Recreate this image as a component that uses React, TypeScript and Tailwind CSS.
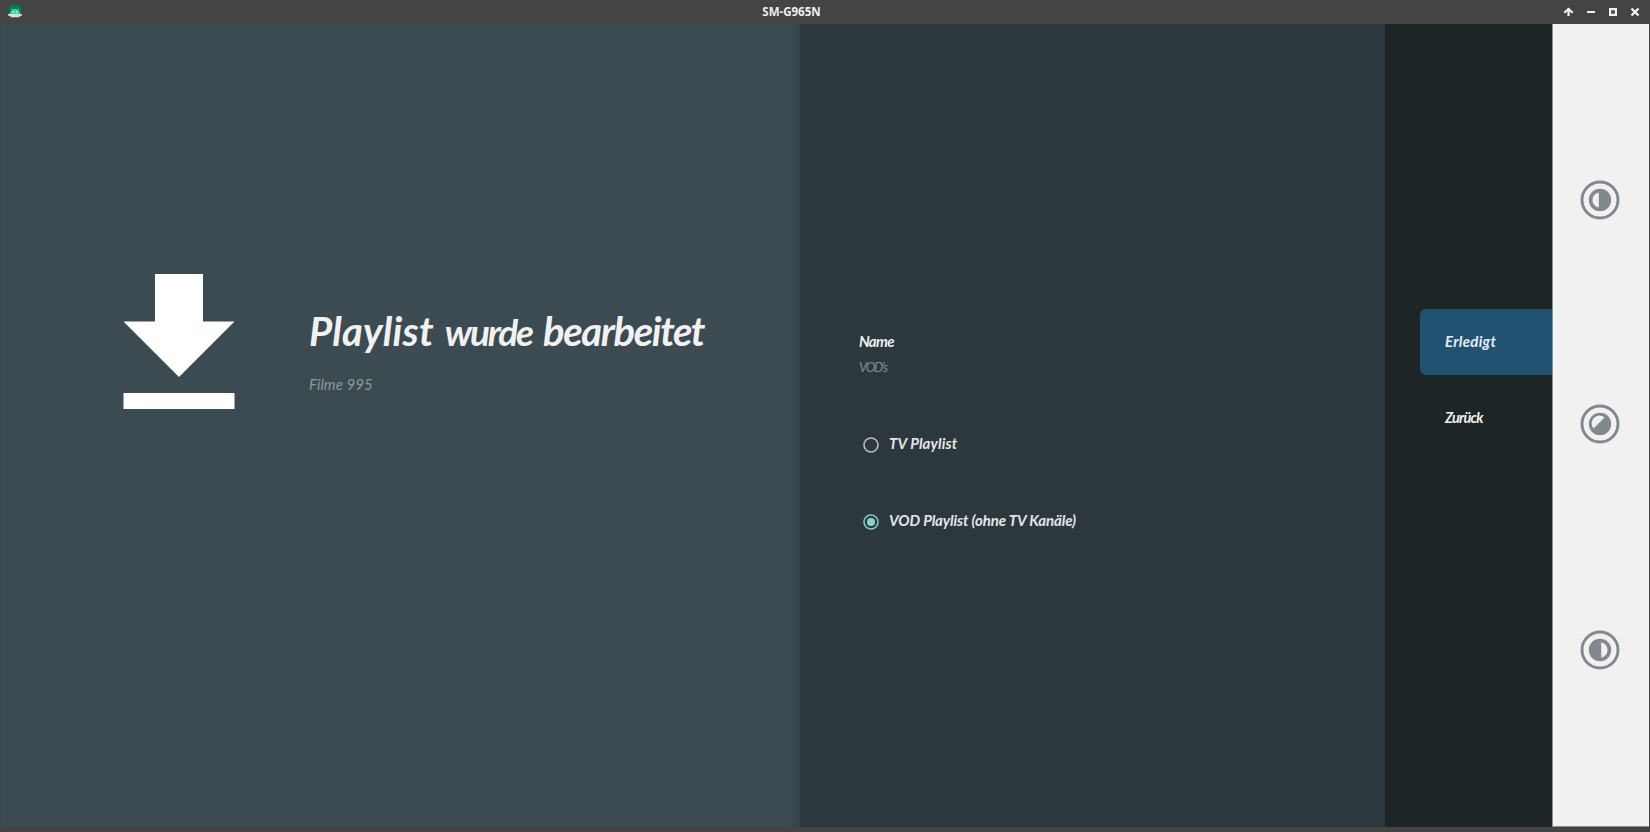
import React from "react";

const script = "font-['Lato','Open_Sans',sans-serif] italic whitespace-nowrap";

function AppIcon() {
  return (
    <svg width="14" height="14" viewBox="0 0 14 14" className="block">
      <rect x="1" y="0" width="12" height="10" rx="1" fill="#08775f" />
      <path d="M3 3l1.6 1.6a5 5 0 0 1 4.8 0L11 3l-.6 2.4A5 5 0 0 1 12 9v1H2V9a5 5 0 0 1 1.6-3.6z" fill="#42d98a" />
      <circle cx="5" cy="7" r=".8" fill="#fff" />
      <circle cx="9" cy="7" r=".8" fill="#fff" />
      <path d="M0 9h14v1.500l-2 .5-1 1.200H3L2 11l-2-.5z" fill="#dedede" />
    </svg>
  );
}

function WindowButtons() {
  return (
    <svg width="78" height="12" viewBox="0 0 78 12" className="block">
      <path d="M1.300 6.800L5.500 3l4.200 3.800M5.500 3v7" fill="none" stroke="#f2f2f2" strokeWidth="2.200" />
      <g fill="#f2f2f2">
        <rect x="24" y="5" width="8" height="2" />
        <path fillRule="evenodd" d="M46 2h8v8h-8zM48.200 4.200v3.600h3.600V4.200z" />
      </g>
      <path d="M68.500 2.500l7 7M75.500 2.500l-7 7" stroke="#f2f2f2" strokeWidth="2.400" />
    </svg>
  );
}

function Contrast({ half }: { half: string }) {
  return (
    <svg width="40" height="40" viewBox="0 0 40 40" className="block">
      <circle cx="20" cy="20" r="18" fill="none" stroke="#82888e" strokeWidth="2.900" />
      <circle cx="20" cy="20" r="11.200" fill="#82888e" />
      <path d={half} fill="#f1f1f1" />
    </svg>
  );
}

function Radio({ on }: { on?: boolean }) {
  return (
    <svg width="16" height="16" viewBox="0 0 16 16" className="block shrink-0">
      <circle cx="8" cy="8" r="7" fill="none" stroke={on ? "#80cbc4" : "#b9bec0"} strokeWidth="1.600" />
      {on && <circle cx="8" cy="8" r="4" fill="#80d8c8" />}
    </svg>
  );
}

export default function App() {
  return (
    <div className="flex h-[832px] w-[1650px] flex-col overflow-hidden bg-[#444444]">
      <header className="flex h-6 shrink-0 items-center bg-[#444444] pl-2 pr-[9px]">
        <AppIcon />
        <div className="flex flex-1 justify-center pl-[1px] pr-[3px]">
          <h1 className="font-['Noto_Sans','Open_Sans',sans-serif] text-[11.500px] leading-6 font-bold text-[#eeeeee]">SM-G965N</h1>
        </div>
        <WindowButtons />
      </header>

      <main className="mx-px flex h-[803px]">
        <section className="flex w-[799px] shrink-0 justify-between bg-[#3b4b51]">
          <div className="flex pl-[122px] pt-[250px]">
            <svg width="112" height="135" viewBox="0 0 112 135" className="block shrink-0">
              <path d="M32 0h48v47.500h31.500L56 103 .5 47.500H32zM.5 119h111v16H.5z" fill="#fff" />
            </svg>
            <div className="flex flex-col pl-[74px] pt-[31px]">
              <h2 className={`${script} h-[52px] text-[40px] leading-[52px] font-bold text-[#f1f1f1] [word-spacing:2px]`}>
                <span className="tracking-[0.200px]">Playlist </span>
                <span className="text-[37px] tracking-[-2.200px]">wurde</span>
                <span className="pl-[2px] tracking-[-1.400px]"> bearbeitet</span>
              </h2>
              <p className={`${script} mt-[17px] h-5 text-[15px] leading-5 tracking-[0.050px] text-[#8f999c]`}>Filme 995</p>
            </div>
          </div>
          <div className="w-[14px] bg-linear-to-r from-[#3b4b51] to-[#35444a]" />
        </section>

        <section className="flex w-[585px] shrink-0 flex-col bg-[#2c383e] pl-[59px] pt-[307px]">
          <p className={`${script} h-5 text-[15px] leading-5 font-bold tracking-[-0.700px] text-[#eeeeee]`}>Name</p>
          <p className={`${script} mt-[6px] h-5 text-[13px] leading-5 tracking-[-1.300px] text-[#838c90]`}>VOD's</p>
          <div className="mt-[56px] flex h-6 items-center gap-[10px] pl-1">
            <Radio />
            <span className={`${script} pb-[4px] text-[15px] leading-5 font-bold tracking-[0.100px] text-[#e4e6e7]`}>TV Playlist</span>
          </div>
          <div className="mt-[53px] flex h-6 items-center gap-[10px] pl-1">
            <Radio on />
            <span className={`${script} pb-[4px] text-[15px] leading-5 font-bold tracking-[-0.120px] text-[#e4e6e7]`}>VOD Playlist (ohne TV Kanäle)</span>
          </div>
        </section>

        <nav className="flex w-[167px] shrink-0 flex-col bg-[#1e2527] pl-[35px] pt-[285px]">
          <button className="flex h-[66px] items-center rounded-l-[6px] bg-[#215272] pl-[25px]">
            <span className={`${script} pb-[3px] text-[15px] leading-5 font-bold tracking-[0.300px] text-[#e4edf2]`}>Erledigt</span>
          </button>
          <button className="mt-3 flex h-[66px] items-center pl-[25px]">
            <span className={`${script} pb-[4px] text-[14.500px] leading-5 font-bold tracking-[-0.800px] text-[#f0f0f0]`}>Zurück</span>
          </button>
        </nav>

        <aside className="flex w-[97px] shrink-0 flex-col items-center border-b border-l border-[#8c8f91] bg-[#f1f1f1] pr-[2px] pt-[156px]">
          <Contrast half="M18.800 12.500v15a7.600 7.600 0 0 1 0-15z" />
          <div className="mt-[184px]"><Contrast half="M13.500 24.500a7.800 7.800 0 0 1 11-11z" /></div>
          <div className="mt-[186px]"><Contrast half="M21.200 12.500v15a7.600 7.600 0 0 0 0-15z" /></div>
        </aside>
      </main>
    </div>
  );
}
